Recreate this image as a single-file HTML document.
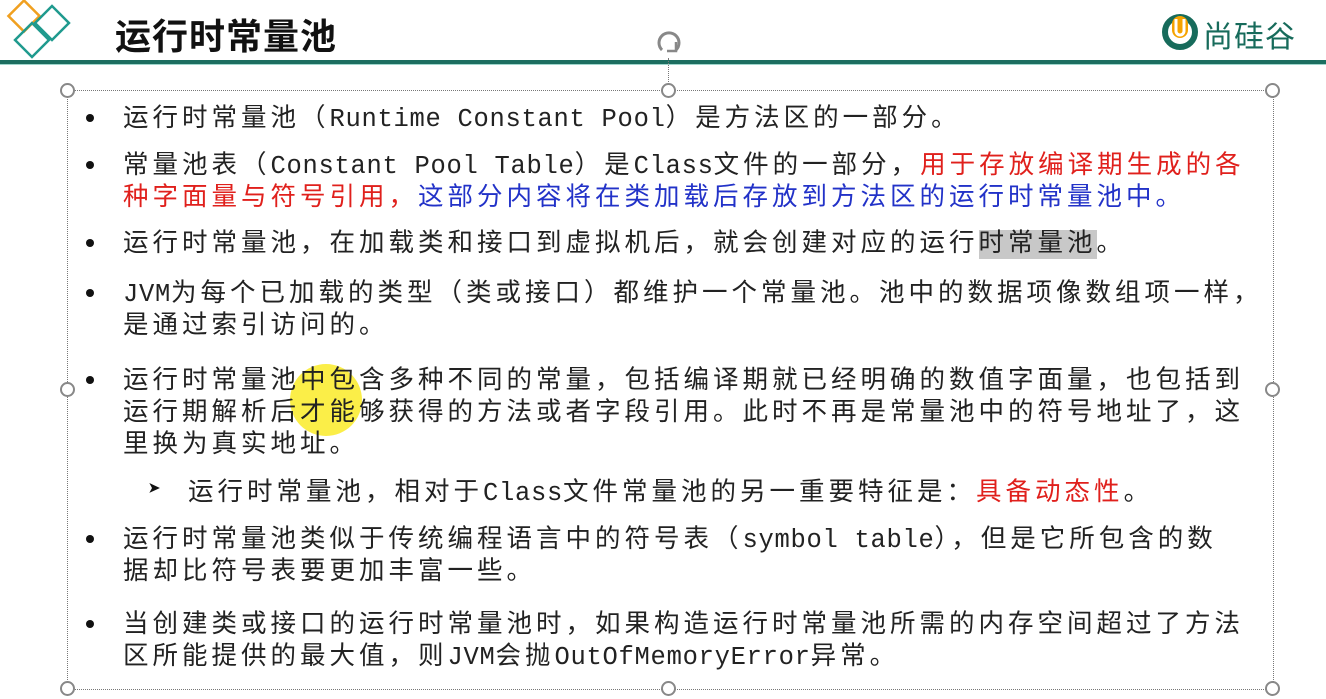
<!DOCTYPE html>
<html><head><meta charset="utf-8"><style>
html,body{margin:0;padding:0;}
body{width:1326px;height:699px;background:#fff;position:relative;overflow:hidden;font-family:"Liberation Mono","Noto Sans CJK SC",monospace;}
.title{position:absolute;left:115px;top:8px;font:bold 36px "Liberation Sans","Noto Sans CJK SC",sans-serif;color:#111;letter-spacing:1px;}
.hl{position:absolute;left:0;top:60px;width:1326px;height:4px;background:#1c6e60;}
.hl2{position:absolute;left:0;top:64px;width:1326px;height:1px;background:#9fd6cc;}
.box{position:absolute;left:67px;top:90px;width:1205px;height:598px;border:1px dotted #777;}
.h{position:absolute;width:11px;height:11px;border:2px solid #888;border-radius:50%;background:#fff;}
.p{position:absolute;left:123px;font-size:25.5px;line-height:32px;color:#222;white-space:nowrap;letter-spacing:4px;}
.m{letter-spacing:0.7px;}
.b{position:absolute;left:86px;width:8px;height:8px;border-radius:50%;background:#111;}
.r{color:#e0201c}.bl{color:#2232c8}
.g{background:#c8c8c8;}
</style></head><body>
<svg style="position:absolute;left:0;top:0" width="80" height="62">
<rect x="13" y="5" width="22" height="22" transform="rotate(45 24 16)" fill="none" stroke="#f0a020" stroke-width="2.5"/>
<rect x="40" y="11" width="24" height="24" transform="rotate(45 52 23)" fill="none" stroke="#1f9a8e" stroke-width="2.5"/>
<rect x="20" y="28" width="24" height="24" transform="rotate(45 32 40)" fill="none" stroke="#1f9a8e" stroke-width="2.5"/>
</svg>
<div class="title">运行时常量池</div>
<svg style="position:absolute;left:1162px;top:14px" width="40" height="36">
<circle cx="18" cy="18" r="15" fill="none" stroke="#176b5b" stroke-width="6"/>
<rect x="10" y="2" width="16" height="22" rx="8" fill="#f5a300"/>
<path d="M14 5 V17 a4 4 0 0 0 8 0 V5" fill="none" stroke="#fff" stroke-width="3"/>
</svg>
<div style="position:absolute;left:1203px;top:12px;font:30px 'Noto Sans CJK SC',sans-serif;color:#176b5b;letter-spacing:1px;">尚硅谷</div>
<div class="hl"></div><div class="hl2"></div>
<svg style="position:absolute;left:654px;top:28px" width="30" height="30"><path d="M8 22 A10 10 0 1 1 22 22" fill="none" stroke="#888" stroke-width="3"/><path d="M22 14 L22 23 L13 23" fill="none" stroke="#888" stroke-width="2.5"/></svg>
<div style="position:absolute;left:668px;top:58px;width:0;height:28px;border-left:1px dotted #777"></div>
<div class="box"></div>
<div class="h" style="left:60px;top:83px"></div><div class="h" style="left:661px;top:83px"></div><div class="h" style="left:1265px;top:83px"></div>
<div class="h" style="left:60px;top:382px"></div><div class="h" style="left:1265px;top:382px"></div>
<div class="h" style="left:60px;top:681px"></div><div class="h" style="left:661px;top:681px"></div><div class="h" style="left:1265px;top:681px"></div>
<div style="position:absolute;left:290px;top:364px;width:72px;height:72px;border-radius:50%;background:rgba(250,235,40,0.85)"></div>

<div class="b" style="top:114px"></div>
<div class="p" style="top:104px">运行时常量池（<span class="m">Runtime Constant Pool</span>）是方法区的一部分。</div>
<div class="b" style="top:161px"></div>
<div class="p" style="top:151px">常量池表（<span class="m">Constant Pool Table</span>）是<span class="m">Class</span>文件的一部分，<span class="r">用于存放编译期生成的各</span><br><span class="r">种字面量与符号引用，</span><span class="bl">这部分内容将在类加载后存放到方法区的运行时常量池中。</span></div>
<div class="b" style="top:239px"></div>
<div class="p" style="top:229px">运行时常量池，在加载类和接口到虚拟机后，就会创建对应的运行<span class="g">时常量池</span>。</div>
<div class="b" style="top:289px"></div>
<div class="p" style="top:279px"><span class="m">JVM</span>为每个已加载的类型（类或接口）都维护一个常量池。池中的数据项像数组项一样，<br>是通过索引访问的。</div>
<div class="b" style="top:376px"></div>
<div class="p" style="top:366px">运行时常量池中包含多种不同的常量，包括编译期就已经明确的数值字面量，也包括到<br>运行期解析后才能够获得的方法或者字段引用。此时不再是常量池中的符号地址了，这<br>里换为真实地址。</div>
<div style="position:absolute;left:148px;top:477px;font-size:22px;color:#111">➤</div>
<div class="p" style="top:478px;left:188px">运行时常量池，相对于<span class="m">Class</span>文件常量池的另一重要特征是：<span class="r">具备动态性</span>。</div>
<div class="b" style="top:535px"></div>
<div class="p" style="top:525px">运行时常量池类似于传统编程语言中的符号表（<span class="m">symbol table</span>），但是它所包含的数<br>据却比符号表要更加丰富一些。</div>
<div class="b" style="top:620px"></div>
<div class="p" style="top:610px">当创建类或接口的运行时常量池时，如果构造运行时常量池所需的内存空间超过了方法<br>区所能提供的最大值，则<span class="m">JVM</span>会抛<span class="m">OutOfMemoryError</span>异常。</div>
</body></html>
